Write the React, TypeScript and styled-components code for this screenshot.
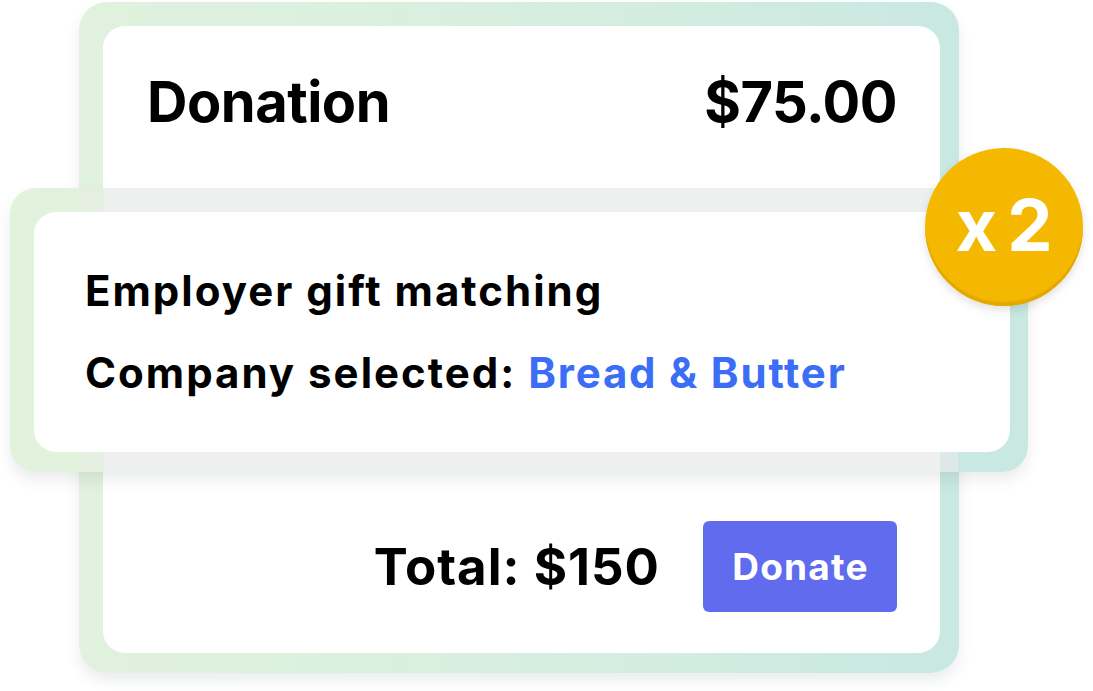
import React from "react";
import styled, { createGlobalStyle } from "styled-components";

const Global = createGlobalStyle`
  html, body { margin: 0; padding: 0; background: #ffffff; }
  body { font-family: Inter, "Noto Sans", sans-serif; -webkit-font-smoothing: antialiased; }
  * { box-sizing: border-box; }
`;

const Stage = styled.div`
  position: relative;
  width: 1093px;
  height: 691px;
  overflow: hidden;
  display: flex;
  align-items: flex-start;
  padding: 2px 0 0 79px;
  background: #ffffff;
`;

const Frame = styled.div<{ $w: number; $h: number }>`
  width: ${(p) => p.$w}px;
  height: ${(p) => p.$h}px;
  padding: 24px 19px 20px 24px;
  border-radius: 28px;
  background: linear-gradient(90deg, #e1f2de 0%, #d8efdf 45%, #c9e8e2 100%);
  box-shadow: 0 8px 14px rgba(60, 80, 70, 0.1);
`;

const DonationCard = styled.div`
  height: 100%;
  background: #ffffff;
  border-radius: 22px;
  display: flex;
  flex-direction: column;
  justify-content: space-between;
  padding: 0 43px 41px 44px;
`;

const HeaderRow = styled.div`
  height: 152px;
  display: flex;
  align-items: center;
  justify-content: space-between;
`;

const Heading = styled.span`
  font-size: 56px;
  font-weight: 700;
  line-height: 1;
  color: #000;
  letter-spacing: -0.5px;
`;

const FooterRow = styled.div`
  display: flex;
  align-items: center;
  justify-content: flex-end;
  gap: 43px;
`;

const Total = styled.span`
  font-size: 51px;
  font-weight: 700;
  line-height: 1;
  color: #000;
  letter-spacing: 1px;
`;

const DonateButton = styled.button`
  width: 194px;
  height: 91px;
  border: none;
  border-radius: 6px;
  background: #616bee;
  color: #ffffff;
  font-family: Inter, "Noto Sans", sans-serif;
  font-size: 37px;
  font-weight: 700;
  letter-spacing: 1.2px;
  padding: 0 0 0 1px;
  cursor: pointer;
`;

const MatchFrame = styled.div`
  position: absolute;
  left: 10px;
  top: 188px;
  width: 1018px;
  height: 284px;
  padding: 24px 18px 20px 24px;
  border-radius: 26px;
  background: linear-gradient(
    90deg,
    #e1f2dd 0px,
    #e1f2dd 70px,
    #e4efe2 70px,
    #e4efe2 94px,
    #eef0ef 94px,
    #eef0ef 930px,
    #dde9e6 930px,
    #dde9e6 948px,
    #c9e8e2 948px,
    #c9e8e2 100%
  );
  box-shadow: 0 8px 14px rgba(60, 80, 70, 0.1);
`;

const MatchCard = styled.div`
  height: 100%;
  background: #ffffff;
  border-radius: 22px;
  display: flex;
  flex-direction: column;
  justify-content: center;
  gap: 34px;
  padding-left: 51px;
`;

const MatchLine = styled.div`
  font-size: 42px;
  font-weight: 700;
  line-height: 48px;
  color: #000;
  letter-spacing: 2px;
`;

const Company = styled.span`
  color: #3b6ef5;
  letter-spacing: 1.8px;
`;

const Badge = styled.div`
  position: absolute;
  left: 925px;
  top: 148px;
  width: 158px;
  height: 158px;
  border-radius: 50%;
  background: #f5b800;
  box-shadow: inset 0 -4px 0 #e2a900, 0 4px 10px rgba(0, 0, 0, 0.12);
  display: flex;
  align-items: center;
  justify-content: center;
  gap: 10px;
  color: #ffffff;
  font-size: 72px;
  font-weight: 700;
  line-height: 1;
  padding-bottom: 4px;
`;

export default function App() {
  return (
    <>
      <Global />
      <Stage>
        <Frame $w={880} $h={671}>
          <DonationCard>
            <HeaderRow>
              <Heading>Donation</Heading>
              <Heading>$75.00</Heading>
            </HeaderRow>
            <FooterRow>
              <Total>Total: $150</Total>
              <DonateButton>Donate</DonateButton>
            </FooterRow>
          </DonationCard>
        </Frame>
        <MatchFrame>
          <MatchCard>
            <MatchLine>Employer gift matching</MatchLine>
            <MatchLine>
              Company selected: <Company>Bread &amp; Butter</Company>
            </MatchLine>
          </MatchCard>
        </MatchFrame>
        <Badge>
          <span>x</span>
          <span>2</span>
        </Badge>
      </Stage>
    </>
  );
}
